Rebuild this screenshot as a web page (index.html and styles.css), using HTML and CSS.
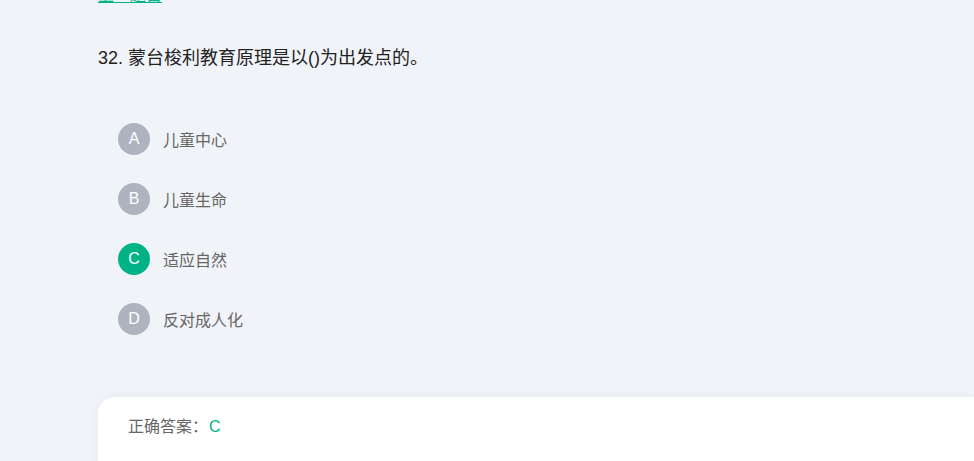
FILE: index.html
```html
<!DOCTYPE html>
<html>
<head>
    <title>题目</title>
    <link rel="stylesheet" href="styles.css">
</head>
<body>
<div class="page">
    <div class="prev-link"><a href="#">上一题目</a></div>
    <div class="question">32. 蒙台梭利教育原理是以()为出发点的。</div>
    <ul class="options">
        <li class="option"><span class="letter">A</span><span class="option-text">儿童中心</span></li>
        <li class="option"><span class="letter">B</span><span class="option-text">儿童生命</span></li>
        <li class="option"><span class="letter right">C</span><span class="option-text">适应自然</span></li>
        <li class="option"><span class="letter">D</span><span class="option-text">反对成人化</span></li>
    </ul>
    <div class="answer-card">
        <span class="answer-label">正确答案：</span><span class="answer-value">C</span>
    </div>
</div>
</body>
</html>
```
FILE: styles.css
```css
body {
  margin: 0;
  background: #f0f3f7;
  font-family: "Liberation Sans", "Noto Sans CJK SC", sans-serif;
  overflow: hidden;
}

.page {
  padding-left: 98px;
}

.prev-link {
  margin-top: -15px;
  height: 22px;
  font-size: 16px;
  line-height: 22px;
}

.prev-link a {
  color: #00b386;
}

.question {
  margin-top: 38px;
  font-size: 18px;
  line-height: 26px;
  color: #222;
}

.options {
  list-style: none;
  margin: 52px 0 0 0;
  padding: 0 0 0 20px;
}

.option {
  display: flex;
  align-items: center;
  height: 32px;
  margin-bottom: 28px;
}

.option:last-child {
  margin-bottom: 0;
}

.letter {
  width: 32px;
  height: 32px;
  border-radius: 50%;
  background: #adb4c0;
  color: #fff;
  font-size: 16px;
  line-height: 32px;
  text-align: center;
}

.letter.right {
  background: #00b386;
}

.option-text {
  margin-left: 13px;
  font-size: 16px;
  color: #666;
}

.answer-card {
  margin-top: 62px;
  background: #fff;
  border-radius: 16px 0 0 0;
  height: 80px;
  padding: 19px 30px 0;
  box-sizing: border-box;
  font-size: 16px;
  line-height: 22px;
  box-shadow: 0 0 12px rgba(0, 0, 0, 0.04);
}

.answer-label {
  color: #666;
}

.answer-value {
  margin-left: 1px;
  color: #00b386;
}
```
